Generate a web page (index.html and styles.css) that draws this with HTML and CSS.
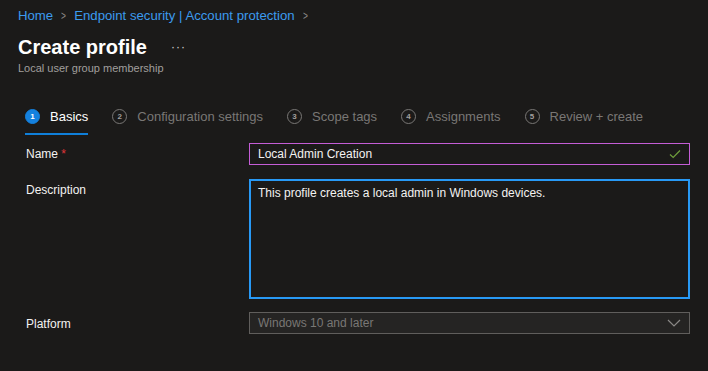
FILE: index.html
```html
<!DOCTYPE html>
<html lang="en">
  <head>
    <meta charset="UTF-8" />
    <title>Create profile</title>
    <link rel="stylesheet" href="styles.css">
  </head>
  <body>
    <div class="page">
      <!-- Breadcrumb -->
      <div class="crumbs">
        <a href="#">Home</a>
        <span class="sep">&gt;</span>
        <a href="#">Endpoint security | Account protection</a>
        <span class="sep">&gt;</span>
      </div>

      <!-- Header -->
      <div class="head">
        <h1>Create profile</h1>
        <span class="more">&middot;&middot;&middot;</span>
      </div>
      <div class="sub">Local user group membership</div>

      <!-- Wizard steps -->
      <div class="steps">
        <div class="step active"><span class="num">1</span><span>Basics</span></div>
        <div class="step"><span class="num">2</span><span>Configuration settings</span></div>
        <div class="step"><span class="num">3</span><span>Scope tags</span></div>
        <div class="step"><span class="num">4</span><span>Assignments</span></div>
        <div class="step"><span class="num">5</span><span>Review + create</span></div>
      </div>

      <!-- Form -->
      <div class="form">
        <div class="label lbl-line">Name <span class="req">*</span></div>
        <div class="field name">
          <span>Local Admin Creation</span>
          <svg width="12" height="10" viewBox="0 0 12 10"><path d="M1 5.5 L4.2 8.5 L11 1.5" fill="none" stroke="#6f9e3c" stroke-width="1.2"/></svg>
        </div>

        <div class="label lbl-top">Description</div>
        <div class="field area">This profile creates a local admin in Windows devices.</div>

        <div class="label lbl-line">Platform</div>
        <div class="field select">
          <span>Windows 10 and later</span>
          <svg width="14" height="8" viewBox="0 0 14 8"><path d="M1 1 L7 7 L13 1" fill="none" stroke="#8a8886" stroke-width="1.2"/></svg>
        </div>
      </div>
    </div>
  </body>
</html>
```

FILE: styles.css
```css
body {
  margin: 0;
  background: #1b1a19;
  color: #f3f2f1;
  font-family: 'Liberation Sans', Arial, sans-serif;
}
.page {
  padding: 8px 18px 0 18px;
}
.crumbs {
  font-size: 13.2px;
  line-height: 16px;
  display: flex;
  gap: 7px;
}
.crumbs a {
  color: #3c9bee;
  text-decoration: none;
}
.crumbs .sep {
  color: #8a8886;
  font-size: 12px;
  transform: scaleX(0.7);
}
.head {
  display: flex;
  align-items: center;
  margin-top: 10px;
  height: 26px;
}
h1 {
  margin: 0;
  font-size: 20px;
  font-weight: bold;
  color: #fff;
}
.more {
  margin-left: 24px;
  font-size: 12px;
  color: #d2d0ce;
  letter-spacing: 1px;
}
.sub {
  font-size: 11px;
  line-height: 14px;
  color: #a19f9d;
  margin-top: 1px;
}
.steps {
  display: flex;
  gap: 24px;
  margin-top: 30px;
  padding-left: 7px;
  font-size: 13px;
  color: #797775;
}
.step {
  display: flex;
  align-items: center;
  gap: 10px;
  height: 22px;
  padding-bottom: 6px;
  border-bottom: 2px solid transparent;
}
.step .num {
  width: 13px;
  height: 13px;
  border: 1px solid #797775;
  border-radius: 50%;
  font-size: 8px;
  font-weight: bold;
  display: flex;
  align-items: center;
  justify-content: center;
  color: #a19f9d;
}
.step.active {
  color: #fff;
  border-bottom-color: #0f7fd9;
}
.step.active .num {
  background: #1481de;
  border-color: #1481de;
  color: #fff;
}
.form {
  display: grid;
  grid-template-columns: 223px 1fr;
  row-gap: 14px;
  margin-top: 8px;
  padding-left: 8px;
  font-size: 12px;
}
.label {
  color: #f3f2f1;
}
.lbl-line {
  line-height: 22px;
}
.lbl-top {
  padding-top: 3px;
  line-height: 16px;
}
.req {
  color: #e0353a;
}
.field {
  box-sizing: border-box;
  display: flex;
  align-items: center;
  justify-content: space-between;
  height: 22px;
  padding: 0 8px;
  color: #f3f2f1;
}
.name {
  border: 1px solid #c45dd6;
}
.area {
  height: 120px;
  align-items: flex-start;
  border: 2px solid #2899f5;
  padding: 4px 7px;
  line-height: 16px;
}
.select {
  margin-top: -1px;
  border: 1px solid #605e5c;
  background: #252423;
  color: #797775;
}
```
